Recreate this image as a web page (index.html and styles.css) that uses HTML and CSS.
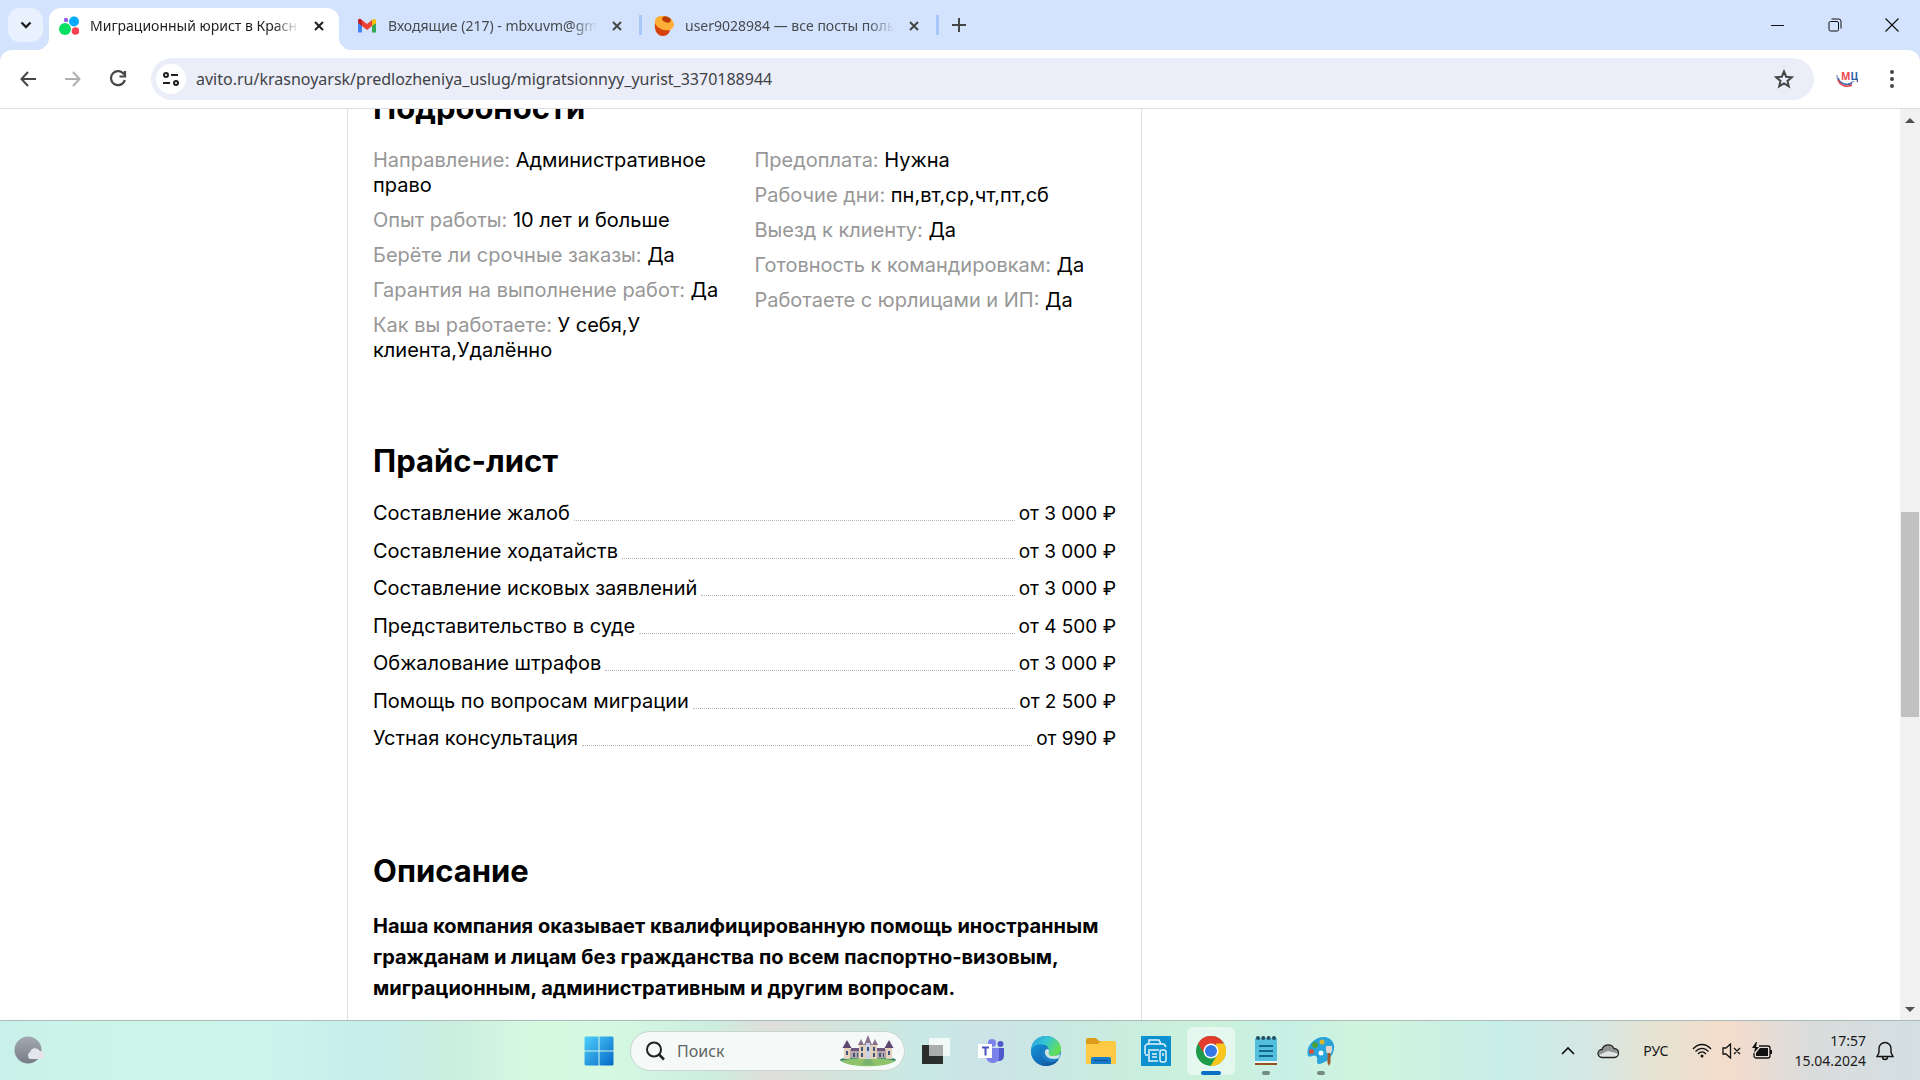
FILE: index.html
```html
<!DOCTYPE html>
<html lang="ru">
<head>
<meta charset="utf-8">
<title>Миграционный юрист в Красноярске</title>
<link rel="stylesheet" href="styles.css">
</head>
<body>
<header class="browser">
  <div class="tabstrip">
    <button class="tab-search" aria-label="Поиск вкладок"><svg width="12" height="8" viewBox="0 0 12 8"><path d="M1.5 1.5 6 6l4.5-4.500" fill="none" stroke="#1f1f1f" stroke-width="2.400"/></svg></button>
    <div class="tab active">
      <svg class="favicon" viewBox="0 0 20 20"><circle cx="6" cy="13" r="6" fill="#04e061"/><circle cx="15" cy="5.500" r="5" fill="#00aaff"/><circle cx="16.500" cy="15" r="3.800" fill="#ff4053"/><circle cx="7" cy="4" r="2.200" fill="#965eeb"/></svg>
      <span class="tab-title">Миграционный юрист в Красноярске</span>
      <button class="tab-close" aria-label="Закрыть"><svg width="10" height="10" viewBox="0 0 10 10"><path d="M1 1l8 8M9 1l-8 8" stroke="#1f1f1f" stroke-width="2"/></svg></button>
    </div>
    <span class="tab-gap"></span>
    <div class="tab">
      <svg class="favicon" viewBox="0 0 20 20"><path d="M1 4v12.500h4V8z" fill="#4285f4"/><path d="M19 4v12.500h-4V8z" fill="#34a853"/><path d="M15 4.500 19 8V5c0-2-2-2.800-4-1z" fill="#fbbc04"/><path d="M15 4.500V10l4-3V4z" fill="#fbbc04"/><path d="M5 4v6l5 4 5-4V4l-5 4z" fill="#ea4335"/><path d="M1 4.500C1 2.500 3 2 5 4v6L1 7z" fill="#c5221f"/></svg>
      <span class="tab-title">Входящие (217) - mbxuvm@gmail.com</span>
      <button class="tab-close" aria-label="Закрыть"><svg width="10" height="10" viewBox="0 0 10 10"><path d="M1 1l8 8M9 1l-8 8" stroke="#444746" stroke-width="2"/></svg></button>
    </div>
    <span class="tab-gap line"></span>
    <div class="tab">
      <svg class="favicon" viewBox="0 0 20 20"><path d="M1 7c-1 7 2 13 8 13 4 0 7-3 7-7z" fill="#d5400b"/><path d="M1 4C2 1 6-1 11 0c6 1 9 6 9 9-1 5-6 6-10 5C5 13 0 9 1 4z" fill="#ffae36"/><ellipse cx="12.500" cy="3.500" rx="4.500" ry="2.800" transform="rotate(20 12.500 3.500)" fill="#b93c05"/></svg>
      <span class="tab-title">user9028984 — все посты пользователя</span>
      <button class="tab-close" aria-label="Закрыть"><svg width="10" height="10" viewBox="0 0 10 10"><path d="M1 1l8 8M9 1l-8 8" stroke="#444746" stroke-width="2"/></svg></button>
    </div>
    <span class="tab-gap line"></span>
    <button class="new-tab" aria-label="Новая вкладка"><svg width="14" height="14" viewBox="0 0 14 14"><path d="M7 0v14M0 7h14" stroke="#444746" stroke-width="2"/></svg></button>
    <div class="window-buttons">
      <button aria-label="Свернуть"><svg width="14" height="14" viewBox="0 0 14 14"><path d="M0 7.500h13" stroke="#111" stroke-width="1"/></svg></button>
      <button aria-label="Развернуть"><svg width="14" height="14" viewBox="0 0 14 14" fill="none" stroke="#111"><rect x="1" y="3.500" width="9.500" height="9.500" rx="1.500"/><path d="M3.500 1h7A2.500 2.500 0 0 1 13 3.500v7"/></svg></button>
      <button aria-label="Закрыть окно"><svg width="14" height="14" viewBox="0 0 14 14"><path d="M.5.5l13 13M13.500.5l-13 13" stroke="#111" stroke-width="1.200"/></svg></button>
    </div>
  </div>
  <div class="toolbar">
    <button class="tool" aria-label="Назад"><svg width="16" height="16" viewBox="0 0 16 16" fill="none" stroke="#444746" stroke-width="2"><path d="M16 8H1.500M8 1 1.500 8 8 15"/></svg></button>
    <button class="tool" aria-label="Вперёд"><svg width="16" height="16" viewBox="0 0 16 16" fill="none" stroke="#aeb0b2" stroke-width="2"><path d="M0 8h14.500M8 1l6.500 7L8 15"/></svg></button>
    <button class="tool" aria-label="Обновить"><svg width="18" height="18" viewBox="0 0 18 18" fill="none" stroke="#444746" stroke-width="2.200"><path d="M15 4.500A7 7 0 1 0 15.800 10M16 1v5.500h-5.500"/></svg></button>
    <div class="omnibox">
      <button class="site-info" aria-label="Сведения о сайте"><svg width="16" height="14" viewBox="0 0 16 14" fill="none" stroke="#1f1f1f" stroke-width="2"><circle cx="3" cy="3" r="2"/><path d="M8 3h7M0 11h7"/><circle cx="13" cy="11" r="2"/></svg></button>
      <input class="url" type="text" aria-label="Адресная строка" value="avito.ru/krasnoyarsk/predlozheniya_uslug/migratsionnyy_yurist_3370188944">
      <button class="tool" aria-label="Добавить в закладки"><svg width="20" height="20" viewBox="0 0 20 20"><path d="M10 2.500l2.200 5.200 5.600.5-4.300 3.700 1.300 5.500-4.800-2.900-4.800 2.900 1.300-5.500-4.300-3.700 5.600-.5z" fill="none" stroke="#444746" stroke-width="2"/></svg></button>
    </div>
    <button class="tool" aria-label="Расширение МЦ"><svg width="22" height="20" viewBox="0 0 22 20"><text x="5" y="11" font-family="Open Sans, sans-serif" font-size="10" font-weight="700"><tspan fill="#e8474c">М</tspan><tspan fill="#2a5fa8">Ц</tspan></text><path d="M1 6c0 8 9 13 17 6" fill="none" stroke="#8fa3c8" stroke-width="1.500"/><path d="M2 9c2 6 9 8 14 5" fill="none" stroke="#3d68b3" stroke-width="1.500"/><path d="M2 11c3 7 10 7 14 5" fill="none" stroke="#e8474c" stroke-width="1.600"/></svg></button>
    <button class="tool" aria-label="Меню"><svg width="4" height="18" viewBox="0 0 4 18" fill="#444746"><circle cx="2" cy="2" r="2"/><circle cx="2" cy="9" r="2"/><circle cx="2" cy="16" r="2"/></svg></button>
  </div>
</header>

<div class="viewport">
  <main class="page">
    <article class="listing">
      <section class="details">
        <h2>Подробности</h2>
        <div class="params">
          <ul>
            <li><span>Направление:</span> Административное право</li>
            <li><span>Опыт работы:</span> 10 лет и больше</li>
            <li><span>Берёте ли срочные заказы:</span> Да</li>
            <li><span>Гарантия на выполнение работ:</span> Да</li>
            <li><span>Как вы работаете:</span> У себя,У клиента,Удалённо</li>
          </ul>
          <ul>
            <li><span>Предоплата:</span> Нужна</li>
            <li><span>Рабочие дни:</span> пн,вт,ср,чт,пт,сб</li>
            <li><span>Выезд к клиенту:</span> Да</li>
            <li><span>Готовность к командировкам:</span> Да</li>
            <li><span>Работаете с юрлицами и ИП:</span> Да</li>
          </ul>
        </div>
      </section>
      <section class="prices">
        <h2>Прайс-лист</h2>
        <dl>
          <div><dt>Составление жалоб</dt><dd>от 3 000 ₽</dd></div>
          <div><dt>Составление ходатайств</dt><dd>от 3 000 ₽</dd></div>
          <div><dt>Составление исковых заявлений</dt><dd>от 3 000 ₽</dd></div>
          <div><dt>Представительство в суде</dt><dd>от 4 500 ₽</dd></div>
          <div><dt>Обжалование штрафов</dt><dd>от 3 000 ₽</dd></div>
          <div><dt>Помощь по вопросам миграции</dt><dd>от 2 500 ₽</dd></div>
          <div><dt>Устная консультация</dt><dd>от 990 ₽</dd></div>
        </dl>
      </section>
      <section class="description">
        <h2>Описание</h2>
        <p>Наша компания оказывает квалифицированную помощь иностранным гражданам и лицам без гражданства по всем паспортно-визовым, миграционным, административным и другим вопросам.</p>
      </section>
    </article>
  </main>
  <div class="scrollbar">
    <button aria-label="Вверх"><svg width="10" height="5" viewBox="0 0 10 5"><path d="M0 5l5-5 5 5z" fill="#505050"/></svg></button>
    <span class="before"></span><span class="thumb"></span><span class="after"></span>
    <button aria-label="Вниз"><svg width="10" height="5" viewBox="0 0 10 5"><path d="M0 0l5 5 5-5z" fill="#505050"/></svg></button>
  </div>
</div>

<footer class="taskbar">
  <div class="widgets">
    <button class="weather" aria-label="Погода"><svg width="30" height="30" viewBox="0 0 30 30"><defs><linearGradient id="moon" x1="0" y1="0" x2="0" y2="1"><stop offset="0" stop-color="#a3aab4"/><stop offset="1" stop-color="#777c86"/></linearGradient></defs><circle cx="14" cy="14" r="13.500" fill="url(#moon)"/><path d="M16 23a4 4 0 0 1 0-7 5.500 5.500 0 0 1 10-1 4 4 0 0 1 1 8z" fill="#e3e5ea"/></svg></button>
  </div>
  <nav class="apps">
    <button class="app" aria-label="Пуск"><svg width="30" height="30" viewBox="0 0 30 30"><defs><linearGradient id="win" x1="0" y1="0" x2="1" y2="1"><stop offset="0" stop-color="#4fd0fb"/><stop offset="1" stop-color="#0468c8"/></linearGradient></defs><path d="M1.500.5h13v14H.5v-13zM15.500.5h13l1 1v13h-14zM.5 15.500h14v14h-13l-1-1zM15.500 15.500h14v13l-1 1h-13z" fill="url(#win)"/></svg></button>
    <label class="search">
      <svg width="20" height="20" viewBox="0 0 20 20" fill="none" stroke="#222" stroke-width="2"><circle cx="9" cy="8.500" r="7"/><path d="M14 13.500l5 5" stroke-width="2.500"/></svg>
      <input type="text" placeholder="Поиск" aria-label="Поиск">
      <svg width="58" height="32" viewBox="0 0 58 32"><ellipse cx="29" cy="25" rx="28" ry="4" fill="#378b72"/><path d="M2 26c12-4 42-4 54 0-8 7-46 7-54 0z" fill="#8fc36b"/><path d="M5 14h48v9H5z" fill="#b7a6a9"/><path d="M5 13h6v11H5zM47 13h6v11h-6zM20 10h18v14H20z" fill="#e4d0b8"/><path d="M3.500 13 8 5l4.500 8zM45.500 13 50 5l4.500 8z" fill="#5b4770"/><path d="M12 13h8v3h-8zM38 13h8v3h-8z" fill="#6a587f"/><path d="M19 10l3-6 3 6zM33 10l3-6 3 6zM25 10l4-10 4 10z" fill="#87748c"/><path d="M27 8h4v16h-4z" fill="#c9d4ea"/><path d="M7 16h2v4H7zM49 16h2v4h-2zM14 18h2v4h-2zM18 18h1v4h-1zM22 12h2v4h-2zM34 12h2v4h-2zM22 18h2v4h-2zM34 18h2v4h-2zM40 18h2v4h-2zM44 18h1v4h-1zM28 12h2v4h-2z" fill="#3b5580"/><path d="M26 24l-3 6h12l-3-6z" fill="#78b46d"/></svg>
    </label>
    <button class="app" aria-label="Представление задач"><svg width="30" height="28" viewBox="0 0 30 28"><path d="M1 8h21v19H1z" fill="#2c2e2e"/><path d="M8 1h21v18H8z" fill="#f8fafa" opacity=".85"/><path d="M8 8h14v11H8z" fill="#a9adac"/></svg></button>
    <button class="app" aria-label="Teams"><svg width="28" height="26" viewBox="0 0 28 26"><circle cx="15" cy="5" r="4" fill="#7b83eb"/><circle cx="23.500" cy="6" r="3" fill="#5059c9"/><path d="M19 10h8v8a5 5 0 0 1-8 4z" fill="#5059c9"/><path d="M9 10h13v9c0 8-12 8-13 0z" fill="#7b83eb"/><path d="M1 6h14v14H1z" fill="#fff"/><path d="M5 9.500h7M8.500 9.500v8" stroke="#4b53bc" stroke-width="2"/></svg></button>
    <button class="app" aria-label="Edge"><svg width="30" height="30" viewBox="0 0 30 30"><defs><linearGradient id="edge1" x1="0" y1="0" x2="1" y2=".5"><stop offset="0" stop-color="#2f9be0"/><stop offset=".5" stop-color="#35c6d3"/><stop offset="1" stop-color="#63df55"/></linearGradient><linearGradient id="edge2" x1="0" y1="0" x2="1" y2="1"><stop offset="0" stop-color="#1493dc"/><stop offset="1" stop-color="#105199"/></linearGradient></defs><circle cx="15" cy="15" r="15" fill="#1b7fc6"/><path d="M.2 13C1 5 7 0 15 0s15 6 15 13c0 5-4 7-8 7s-6-1-4-4c2-7-10-10-17.800-3z" fill="url(#edge1)"/><path d="M0 15c1-7 12-9 17-4-7-1-9 8-4 12 4 4 10 4 15 0-3 5-8 7-13 7C6 30 0 23 0 15z" fill="url(#edge2)"/><path d="M18 16c-1 2 0 4 4 4 3 0 5-1 7-2l-1 4c-8 3-15-1-14-7 1-2 3-3 4-1z" fill="#cfe5e3"/></svg></button>
    <button class="app" aria-label="Проводник"><svg width="30" height="28" viewBox="0 0 30 28"><path d="M0 3a2 2 0 0 1 2-2h8l3 3h15v8H0z" fill="#dc9c1a"/><path d="M0 7h12l3-3h13a2 2 0 0 1 2 2v21H0z" fill="#fcca45"/><path d="M5 27v-5a2 2 0 0 1 2-2h16a2 2 0 0 1 2 2v5z" fill="#167dc9"/><path d="M8 23.500h14" stroke="#0a559c" stroke-width="1.500"/></svg></button>
    <button class="app" aria-label="Принтер"><svg width="30" height="30" viewBox="0 0 30 30"><path d="M0 0h30v30H0z" fill="#0b91cf"/><g fill="none" stroke="#e3f4fc" stroke-width="1.500"><path d="M8 8V4h10l2 4M4 18V10l2-2h17l2 3M4 19h3M7 14h11M8 15v10h9M11 18h5M11 21h5"/><rect x="19" y="14" width="6" height="12" rx="2"/><path d="M22 17v3"/></g></svg></button>
    <button class="app current" aria-label="Chrome"><svg width="30" height="30" viewBox="0 0 30 30"><circle cx="15" cy="15" r="15" fill="#1e9a4b"/><path d="M2 7.500a15 15 0 0 1 26 0L15 9 8.700 18.500z" fill="#e33b2e"/><path d="M28 7.500A15 15 0 0 1 14.500 30L21.500 18.500 20 7.500z" fill="#fbc61d"/><circle cx="15" cy="15" r="7.500" fill="#fff"/><circle cx="15" cy="15" r="6" fill="#3478e6"/></svg></button>
    <button class="app open" aria-label="Блокнот"><svg width="24" height="32" viewBox="0 0 24 32"><path d="M1 27h22v3H1z" fill="#94501d"/><path d="M1 3h22v25H1z" fill="#53bedd"/><path d="M1 26h22v2H1z" fill="#e6f4f8"/><path d="M5 11h14M5 16h14M5 21h14" stroke="#12698d" stroke-width="2"/><g fill="#254e60"><circle cx="4" cy="3" r="2"/><circle cx="9.300" cy="3" r="2"/><circle cx="14.600" cy="3" r="2"/><circle cx="20" cy="3" r="2"/></g></svg></button>
    <button class="app open" aria-label="Paint"><svg width="30" height="30" viewBox="0 0 30 30"><path d="M2 20C-1 10 9 0 19 1c7 1 10 7 9 12-1 8-8 14-15 15-4 0 0-5-3-8-2-2-5 2-8 0z" fill="#29a3dc"/><circle cx="9" cy="9" r="3" fill="#4b9f3c"/><circle cx="16" cy="6" r="2.500" fill="#d7b72c"/><circle cx="5.500" cy="15.500" r="2.500" fill="#d3523c"/><circle cx="15" cy="17" r="2.500" fill="#e9f7fb"/><path d="M20 10h6v5l-1.500 3h-3L20 15z" fill="#ddd5cb"/><path d="M21.500 17h3v10l-1.500 3-1.500-3z" fill="#9d5a2a"/></svg></button>
  </nav>
  <div class="tray">
    <button aria-label="Скрытые значки"><svg width="14" height="9" viewBox="0 0 14 9"><path d="M1 8l6-6 6 6" fill="none" stroke="#111" stroke-width="1.700"/></svg></button>
    <button class="cloud" aria-label="OneDrive"><svg width="22" height="16" viewBox="0 0 22 16"><path d="M5 14.500a4 4 0 0 1 0-8 6.500 6.500 0 0 1 12-1 4.500 4.500 0 0 1 0 9z" fill="#e3e5e5"/><path d="M5 6.500a6.500 6.500 0 0 1 12-1 5 5 0 0 1 4 5L11 8 2 12a4 4 0 0 1 3-5.500z" fill="#949696"/><path d="M5 14.500a4 4 0 0 1 0-8 6.500 6.500 0 0 1 12-1 4.500 4.500 0 0 1 0 9z" fill="none" stroke="#222" stroke-width="1.300"/></svg></button>
    <button class="lang">РУС</button>
    <button class="status" aria-label="Сеть, звук, батарея">
      <svg width="20" height="15" viewBox="0 0 20 15" fill="none" stroke="#111" stroke-width="1.300"><path d="M1 6c5-6 13-6 18 0M3.500 8.500c4-4 9-4 13 0M6 11c3-3 5-3 8 0"/><circle cx="10" cy="13" r="1.500" fill="#111" stroke="none"/></svg>
      <svg width="20" height="16" viewBox="0 0 20 16" fill="none" stroke="#111" stroke-width="1.300"><path d="M1 5h3l4.500-4v14L4 11H1zM12 5l6 6M18 5l-6 6"/></svg>
      <svg width="20" height="17" viewBox="0 0 20 17"><path d="M7 4h9a2 2 0 0 1 2 2v8a2 2 0 0 1-2 2H4a2 2 0 0 1-2-2v-3" fill="none" stroke="#111" stroke-width="1.300"/><path d="M8 6h8v8H4v-3z" fill="#111"/><path d="M4 0 0 6h3l-1 5 5-6H4l1-5zM18 8h2v4h-2z" fill="#111"/></svg>
    </button>
    <button class="clock"><time>17:57</time><time>15.04.2024</time></button>
    <button aria-label="Уведомления"><svg width="18" height="20" viewBox="0 0 18 20" fill="none" stroke="#111" stroke-width="1.400"><path d="M1 15.500h16l-2-4V7.500a6 6 0 0 0-12 0v4zM6.500 16a2.500 2.500 0 0 0 5 0"/></svg></button>
  </div>
</footer>
</body>
</html>
```
FILE: styles.css
```css
* { box-sizing: border-box; }

body {
  margin: 0;
  height: 100vh;
  display: flex;
  flex-direction: column;
  overflow: hidden;
  background: #fff;
  color: #000;
  font-family: "Noto Sans", sans-serif;
}

button {
  display: flex;
  align-items: center;
  justify-content: center;
  margin: 0;
  padding: 0;
  border: 0;
  background: none;
  color: inherit;
  font: inherit;
}

input {
  min-width: 0;
  padding: 0;
  border: 0;
  outline: 0;
  background: none;
  font: inherit;
}

svg { display: block; flex: none; }

/* Browser frame */
.browser { flex: none; background: #d3e2fd; }

.tabstrip {
  display: flex;
  align-items: flex-end;
  height: 50px;
  padding-left: 8px;
}

.tab-search {
  align-self: center;
  width: 35px;
  height: 34px;
  margin-right: 6px;
  border-radius: 12px;
  background: #e9f1fe;
}

.tab {
  position: relative;
  display: flex;
  align-items: center;
  width: 290px;
  height: 42px;
  padding: 0 10px 6px;
  color: #474a4e;
}

.tab.active {
  border-radius: 12px 12px 0 0;
  background: #fff;
  color: #1f1f1f;
}

.tab.active::before,
.tab.active::after {
  content: "";
  position: absolute;
  bottom: 0;
  width: 12px;
  height: 12px;
}
.tab.active::before { left: -12px; background: radial-gradient(circle at 0 0, transparent 12px, #fff 12px); }
.tab.active::after { right: -12px; background: radial-gradient(circle at 100% 0, transparent 12px, #fff 12px); }

.favicon { width: 20px; height: 20px; }

.tab-title {
  flex: 1;
  margin: 0 10px 0 11px;
  overflow: hidden;
  white-space: nowrap;
  font-size: 14px;
  line-height: 24px;
  mask-image: linear-gradient(to right, #000 88%, transparent);
}

.tab-close { width: 20px; height: 20px; }

.tab-gap { width: 8px; height: 20px; margin-bottom: 15px; }
.tab-gap.line { border-left: 3px solid #a8c7fa; width: 4px; margin-left: 2px; margin-right: 1px; }

.new-tab { align-self: center; width: 32px; height: 32px; margin-left: 2px; }

.window-buttons { display: flex; align-self: stretch; margin-left: auto; }
.window-buttons button { width: 57px; }

.toolbar {
  display: flex;
  align-items: center;
  gap: 5px;
  height: 59px;
  padding: 0 8px;
  border-bottom: 1px solid #dcdde0;
  border-radius: 12px 12px 0 0;
  background: #fff;
}

.tool { width: 40px; height: 40px; }

.omnibox {
  flex: 1;
  display: flex;
  align-items: center;
  height: 42px;
  margin: 0 8px;
  padding: 0 10px 0 5px;
  border-radius: 21px;
  background: #ebeef8;
}

.site-info {
  width: 30px;
  height: 30px;
  border-radius: 50%;
  background: #fff;
}

.url {
  flex: 1;
  margin-left: 10px;
  color: #3f4246;
  font-size: 16px;
}

/* Page */
.viewport { flex: 1; min-height: 0; display: flex; }

.page {
  flex: 1;
  display: grid;
  grid-template-columns: 347fr 795fr 758fr;
  overflow: hidden;
  font-family: Inter, sans-serif;
  font-size: 20px;
  line-height: 25px;
}

.listing {
  grid-column: 2;
  margin-top: -21px;
  padding: 0 25px;
  border: solid #dfdfdf;
  border-width: 0 1px;
}

h2 {
  margin: 0;
  font-size: 31px;
  font-weight: 700;
  line-height: 40px;
}

.params {
  display: grid;
  grid-template-columns: 1fr 1fr;
  gap: 20px;
  margin-top: 20px;
}

ul { margin: 0; padding: 0; list-style: none; }
li { margin-bottom: 10px; }
li span { color: #979797; }

.prices { margin-top: 68px; }

dl {
  display: grid;
  align-content: space-between;
  min-height: 250px;
  margin: 20px 0 0;
}
dl div { display: flex; }
dl div::before {
  content: "";
  order: 1;
  flex: 1;
  margin: 0 4px 5px;
  border-bottom: 1px dotted #b8b8b8;
}
dd { order: 2; margin: 0; font-size: 19px; }

.description { margin-top: 100px; }
.description p {
  margin: 20px 0 0;
  font-weight: 700;
  line-height: 31px;
}

.scrollbar {
  display: flex;
  flex-direction: column;
  width: 20px;
  background: #f1f1f1;
}
.scrollbar button { height: 22px; }
.before { flex: 381; }
.thumb { flex: 205; margin: 0 1px; background: #c1c1c1; }
.after { flex: 281; }

/* Taskbar */
.taskbar {
  flex: none;
  display: grid;
  grid-template-columns: 1fr auto 1fr;
  height: 60px;
  border-top: 1px solid #a9bdb8;
  background: linear-gradient(to right,
    #caf1e9 0%, #cdf6ea 8%, #cbf4ec 15%, #c5edec 19%, #c9eddf 23%,
    #d6fae0 28%, #d5f8e1 32%, #cceee0 37%, #dfdedb 40%, #cfe6de 45%,
    #c9e9e5 48%, #cce3e8 51%, #c9ecdf 58%, #ccf2da 63%, #c7efe5 67%,
    #d0f5dc 71%, #c8eee8 78%, #d6e7e3 83%, #e5e3d2 86%, #f4dccb 90%,
    #dbdcdc 94%, #d3dfe2 100%);
}

.widgets { display: flex; align-items: center; padding-left: 14px; }

.apps { display: flex; align-items: center; gap: 7px; }

.app {
  position: relative;
  width: 48px;
  height: 48px;
  border-radius: 6px;
}
.app.current { background: #e5f8ef; }
.app.current::after,
.app.open::after {
  content: "";
  position: absolute;
  bottom: 0;
  width: 8px;
  height: 4px;
  border-radius: 2px;
  background: #748a84;
}
.app.current::after { width: 20px; background: #0b70c4; }

.search {
  display: flex;
  align-items: center;
  width: 275px;
  height: 40px;
  padding: 0 7px 0 14px;
  border: 1px solid #c9d6d0;
  border-radius: 20px;
  background: #f5faf8;
}
.search input { flex: 1; margin-left: 12px; font-size: 16px; }
.search input::placeholder { color: #606463; opacity: 1; }

.tray {
  display: flex;
  align-items: center;
  justify-content: flex-end;
  padding-right: 26px;
  color: #1b1b1b;
  font-size: 14px;
  line-height: 20px;
}
.cloud { margin: 0 24px 0 22px; }
.status { gap: 10px; margin: 0 22px 0 24px; }
.clock { flex-direction: column; align-items: flex-end; margin-right: 10px; }
```
